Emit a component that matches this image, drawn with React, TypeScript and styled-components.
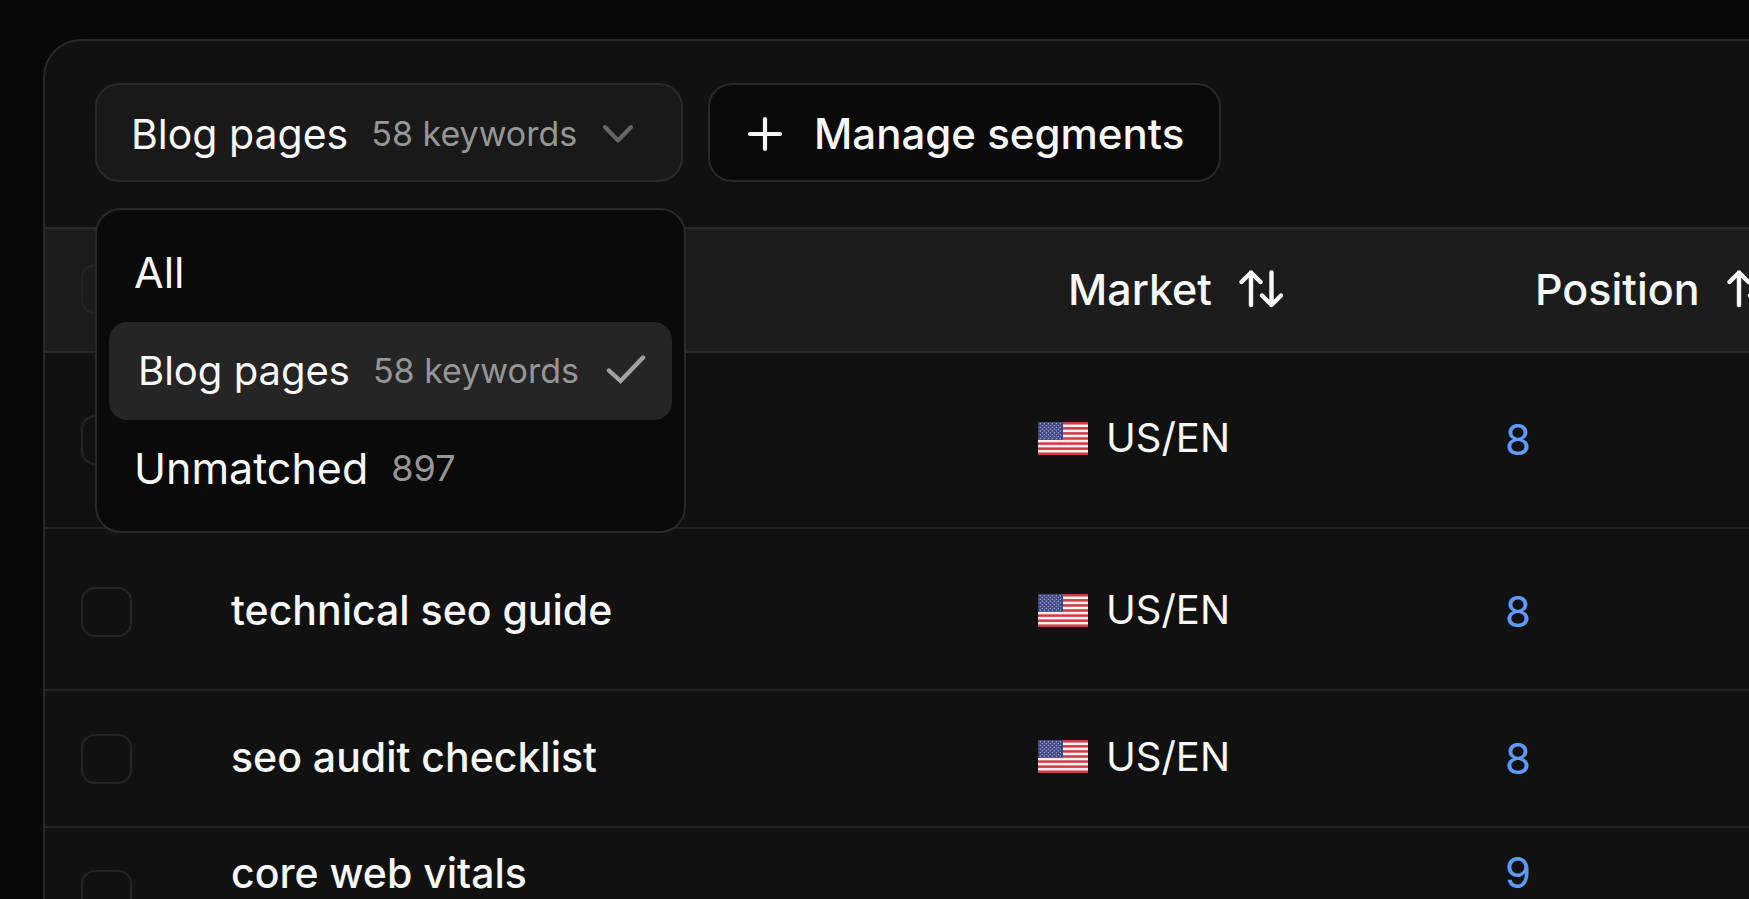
import React, { useState } from 'react';
import styled, { createGlobalStyle, css } from 'styled-components';

const color = {
  page: '#080808',
  panel: '#111111',
  head: '#1c1c1c',
  control: '#191919',
  sunken: '#0a0a0a',
  active: '#252525',
  line: '#292929',
  lineSoft: '#232323',
  box: '#242424',
  text: '#f7f7f7',
  muted: '#969696',
  check: '#a2a2a2',
  faint: '#666666',
  link: '#609cf6',
};

const GlobalStyle = createGlobalStyle`
  *, *::before, *::after { box-sizing: border-box; }
  body {
    margin: 0;
    background: ${color.page};
    color: ${color.text};
    font-family: Inter, "Liberation Sans", sans-serif;
  }
  button, input { font: inherit; color: inherit; }
`;

const Page = styled.main`
  height: 100vh;
  overflow: hidden;
  padding: 39px 0 0 43px;
`;

const Panel = styled.section`
  min-height: 100%;
  background: ${color.panel};
  border: 2px solid ${color.line};
  border-right: 0;
  border-bottom: 0;
  border-top-left-radius: 38px;
`;

const Toolbar = styled.div`
  display: flex;
  align-items: flex-start;
  gap: 25px;
  padding: 42px 50px 45px;
`;

const Dropdown = styled.div`
  position: relative;
  width: 588px;
`;

const ControlButton = styled.button`
  display: flex;
  align-items: center;
  height: 99px;
  margin: 0;
  border: 2px solid ${color.line};
  border-radius: 24px;
  white-space: nowrap;
`;

const SegmentTrigger = styled(ControlButton)`
  width: 100%;
  padding: 2px 34px 0;
  background: ${color.control};
  font-size: 41px;
`;

const ManageButton = styled(ControlButton)`
  gap: 31px;
  padding: 2px 29px 0 37px;
  background: ${color.sunken};
  font-size: 42px;
  font-weight: 500;
  min-width: 513px;
`;

const Count = styled.span<{ $size?: number }>`
  margin-left: 23px;
  color: ${color.muted};
  font-size: ${({ $size = 34 }) => $size}px;
`;

const Menu = styled.ul`
  position: absolute;
  z-index: 2;
  top: calc(100% + 26px);
  left: 0;
  width: 591px;
  margin: 0;
  padding: 14px 12px 13px;
  list-style: none;
  background: ${color.sunken};
  border: 2px solid ${color.line};
  border-radius: 26px;
`;

const MenuItem = styled.button<{ $selected: boolean }>`
  display: flex;
  align-items: center;
  width: 100%;
  height: 98px;
  padding: 0 25px 2px;
  border: 0;
  border-radius: 18px;
  background: transparent;
  font-size: 43px;
  ${({ $selected }) =>
    $selected &&
    css`
      padding: 0 26px 2px 29px;
      background: ${color.active};
      font-size: 40px;
    `}
`;

const ChevronIcon = styled.svg`
  width: 32px;
  height: 20px;
  margin-left: 25px;
`;

const CheckIcon = styled.svg`
  width: 40px;
  height: 30px;
  margin-left: auto;
`;

const PlusIcon = styled.svg`
  width: 36px;
  height: 36px;
`;

const SortIcon = styled.svg`
  flex: none;
  width: 44px;
  height: 38px;
`;

const Table = styled.table`
  width: 100%;
  table-layout: fixed;
  border-spacing: 0;
`;

const Col = styled.col<{ $width?: number }>`
  ${({ $width }) => $width && `width: ${$width}px;`}
`;

const HeadCell = styled.th`
  height: 126px;
  padding: 0 0 2px 30px;
  overflow: hidden;
  background: ${color.head};
  border: 0 solid ${color.line};
  border-width: 2px 0;
  text-align: left;
`;

const SortButton = styled.button`
  display: flex;
  align-items: center;
  gap: 27px;
  padding: 0;
  border: 0;
  background: none;
  font-size: 43px;
  font-weight: 500;
  line-height: 50px;
`;

const Row = styled.tr<{ $height: number; $inset?: number; $top?: boolean }>`
  height: ${({ $height }) => $height}px;
  --row-inset: ${({ $inset = 0 }) => $inset}px;
  --row-align: ${({ $top }) => ($top ? 'top' : 'middle')};
`;

const Cell = styled.td`
  padding: var(--row-inset) 0 0;
  border-bottom: 2px solid ${color.lineSoft};
  line-height: 50px;
`;

const TextCell = styled(Cell)`
  padding-bottom: 4px;
  vertical-align: var(--row-align);
  font-size: 41px;
  font-weight: 500;
`;

const RankCell = styled(Cell)`
  vertical-align: var(--row-align);
  color: ${color.link};
  font-size: 42px;
`;

const CheckCell = styled(Cell)`
  padding-left: 36px;
`;

const CheckHeadCell = styled(HeadCell)`
  padding-left: 36px;
`;

const Checkbox = styled.input`
  appearance: none;
  display: block;
  width: 51px;
  height: 50px;
  margin: 0;
  border: 2px solid ${color.box};
  border-radius: 14px;
  &:checked { background: ${color.link}; }
`;

const Market = styled.div`
  display: flex;
  align-items: center;
  gap: 18px;
  font-size: 40px;
  font-weight: 400;
`;

const FlagIcon = styled.svg`
  width: 50px;
  height: 33px;
`;

function Chevron() {
  return (
    <ChevronIcon viewBox="0 0 32 20" aria-hidden="true">
      <path d="M3 3 L16 16.5 L29 3" fill="none" stroke={color.faint} strokeWidth="4" strokeLinecap="round" strokeLinejoin="round" />
    </ChevronIcon>
  );
}

function Check() {
  return (
    <CheckIcon viewBox="0 0 40 30" aria-hidden="true">
      <path d="M3 15.5 L14.5 26 L37 2.5" fill="none" stroke={color.check} strokeWidth="4.4" strokeLinecap="round" strokeLinejoin="miter" />
    </CheckIcon>
  );
}

function Plus() {
  return (
    <PlusIcon viewBox="0 0 36 36" aria-hidden="true">
      <path d="M18 3 V33 M3 18 H33" fill="none" stroke={color.text} strokeWidth="4.2" strokeLinecap="round" />
    </PlusIcon>
  );
}

function SortArrows() {
  return (
    <SortIcon viewBox="0 0 44 38" aria-hidden="true">
      <path
        d="M12 35 V2.5 M2.5 12 L12 2.5 L21.5 12 M32.5 2.5 V35 M23 25.5 L32.5 35 L42 25.5"
        fill="none"
        stroke={color.text}
        strokeWidth="4.4"
        strokeLinecap="round"
        strokeLinejoin="round"
      />
    </SortIcon>
  );
}

const stripes = [0, 2, 4, 6, 8, 10, 12];
const starRows = [0, 1, 2, 3, 4, 5, 6, 7, 8];

function UsFlag() {
  return (
    <FlagIcon viewBox="0 0 50 33" role="img" aria-label="United States">
      <rect width="50" height="33" fill="#f7f1f2" />
      {stripes.map((n) => (
        <rect key={n} y={(n * 33) / 13} width="50" height={33 / 13} fill="#d23a45" />
      ))}
      <rect width="25" height={(33 / 13) * 7} fill="#3f4684" />
      {starRows.map((r) =>
        Array.from({ length: r % 2 ? 5 : 6 }, (_, c) => (
          <circle key={`${r}-${c}`} cx={2.3 + (r % 2 ? 2 : 0) + c * 4} cy={1.8 + r * 1.8} r="0.7" fill="#b9bcd8" />
        )),
      )}
    </FlagIcon>
  );
}

const segments = [
  { id: 'all', name: 'All' },
  { id: 'blog', name: 'Blog pages', count: '58 keywords', countSize: 34 },
  { id: 'unmatched', name: 'Unmatched', count: '897', countSize: 36 },
];

const keywords = [
  { name: '', market: 'US/EN', position: 8, height: 176 },
  { name: 'technical seo guide', market: 'US/EN', position: 8, height: 162, inset: 6 },
  { name: 'seo audit checklist', market: 'US/EN', position: 8, height: 137 },
  { name: 'core web vitals', market: '', position: 9, height: 115, inset: 20, top: true },
];

export default function App() {
  const [open, setOpen] = useState(true);
  const [selected, setSelected] = useState('blog');
  const current = segments.find((s) => s.id === selected)!;

  return (
    <>
      <GlobalStyle />
      <Page>
        <Panel>
          <Toolbar>
            <Dropdown>
              <SegmentTrigger type="button" aria-haspopup="menu" aria-expanded={open} onClick={() => setOpen(!open)}>
                {current.name}
                {current.count && <Count>{current.count}</Count>}
                <Chevron />
              </SegmentTrigger>
              {open && (
                <Menu role="menu">
                  {segments.map((s) => (
                    <li key={s.id} role="none">
                      <MenuItem
                        type="button"
                        role="menuitemradio"
                        aria-checked={s.id === selected}
                        $selected={s.id === selected}
                        onClick={() => setSelected(s.id)}
                      >
                        {s.name}
                        {s.count && <Count $size={s.countSize}>{s.count}</Count>}
                        {s.id === selected && <Check />}
                      </MenuItem>
                    </li>
                  ))}
                </Menu>
              )}
            </Dropdown>
            <ManageButton type="button">
              <Plus />
              Manage segments
            </ManageButton>
          </Toolbar>
          <Table>
            <colgroup>
              <Col $width={186} />
              <Col />
              <Col $width={467} />
              <Col $width={244} />
            </colgroup>
            <thead>
              <tr>
                <CheckHeadCell>
                  <Checkbox type="checkbox" aria-label="Select all keywords" />
                </CheckHeadCell>
                <HeadCell aria-label="Keyword" />
                <HeadCell>
                  <SortButton type="button">
                    Market
                    <SortArrows />
                  </SortButton>
                </HeadCell>
                <HeadCell>
                  <SortButton type="button">
                    Position
                    <SortArrows />
                  </SortButton>
                </HeadCell>
              </tr>
            </thead>
            <tbody>
              {keywords.map((k, i) => (
                <Row key={i} $height={k.height} $inset={k.inset} $top={k.top}>
                  <CheckCell>
                    <Checkbox type="checkbox" aria-label={`Select ${k.name || 'keyword'}`} />
                  </CheckCell>
                  <TextCell>{k.name}</TextCell>
                  <TextCell>
                    {k.market && (
                      <Market>
                        <UsFlag />
                        {k.market}
                      </Market>
                    )}
                  </TextCell>
                  <RankCell>{k.position}</RankCell>
                </Row>
              ))}
            </tbody>
          </Table>
        </Panel>
      </Page>
    </>
  );
}
